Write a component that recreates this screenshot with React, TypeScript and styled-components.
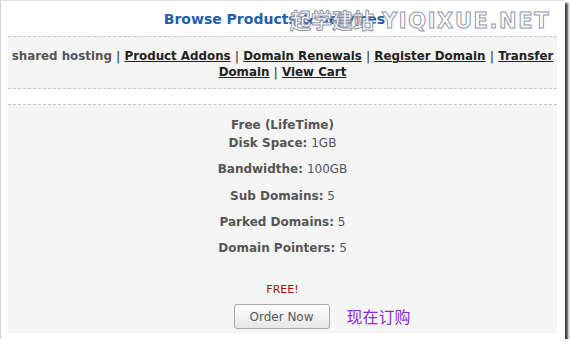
import React from "react";
import styled, { createGlobalStyle } from "styled-components";

const GlobalStyle = createGlobalStyle`
  html, body {
    margin: 0;
    padding: 0;
    background: #ffffff;
  }
  body {
    font-family: "DejaVu Sans", Verdana, sans-serif;
  }
`;

const Frame = styled.div`
  position: relative;
  box-sizing: border-box;
  width: 565px;
  height: 339px;
  background: #fff;
  border-left: 1px solid #d0d0d0;
  border-top: 1px solid #e0e0e0;
  box-shadow: 3px 3px 2px rgba(0, 0, 0, 0.75);
  padding: 0 8px 0 7px;
  display: flex;
  flex-direction: column;
`;

const Heading = styled.h2`
  margin: 0;
  height: 34px;
  display: flex;
  align-items: center;
  justify-content: center;
  padding: 1px 16px 0 0;
  font-size: 14px;
  font-weight: bold;
  color: #1d5fae;
`;

const Panel = styled.div<{ $bottom?: boolean }>`
  background: #f5f5f5;
  border-top: 1px dashed #c8c8c8;
  border-bottom: ${(p) => (p.$bottom ? "1px dashed #c8c8c8" : "none")};
  text-align: center;
`;

const Nav = styled(Panel)`
  padding: 11px 2px 8px;
  font-size: 11.85px;
  font-weight: bold;
  line-height: 16px;
  color: #555;
`;

const NavLink = styled.a`
  color: #222;
  text-decoration: underline;
  cursor: pointer;
`;

const Gap = styled.div`
  height: 15px;
`;

const Product = styled(Panel)`
  flex: 1;
  margin-bottom: 6px;
  padding-top: 12px;
  display: flex;
  flex-direction: column;
  align-items: center;
  font-size: 12px;
  color: #555;
`;

const Title = styled.div`
  font-weight: bold;
  line-height: 17px;
`;

const Spec = styled.div<{ $first?: boolean }>`
  line-height: 17px;
  margin-top: ${(p) => (p.$first ? "1px" : "9.3px")};
  b {
    font-weight: bold;
  }
`;

const Price = styled.div`
  margin-top: 26px;
  color: #a01010;
  font-size: 11px;
  line-height: 14px;
`;

const OrderRow = styled.div`
  position: relative;
  margin-top: 7px;
  margin-right: 2px;
`;

const OrderButton = styled.button`
  width: 96px;
  height: 25px;
  border: 1px solid #a8a8a8;
  border-radius: 3px;
  background: linear-gradient(#ffffff, #e6e6e6);
  font-family: "DejaVu Sans", Verdana, sans-serif;
  font-size: 12px;
  color: #555;
  cursor: pointer;
`;

const Note = styled.span`
  position: absolute;
  left: 113px;
  top: 0;
  white-space: nowrap;
  font-family: "Noto Sans CJK SC", sans-serif;
  font-size: 16px;
  color: #8a2be2;
`;

const Watermark = styled.div`
  position: absolute;
  left: 289px;
  top: 3px;
  white-space: nowrap;
  font-family: "Noto Sans CJK SC", "DejaVu Sans", sans-serif;
  font-weight: 700;
  font-size: 21px;
  color: #fff;
  -webkit-text-stroke: 1px #8f96a8;
  pointer-events: none;
`;

const Latin = styled.span`
  margin-left: 8px;
  font-family: "DejaVu Sans", sans-serif;
  letter-spacing: 1.6px;
`;

const links = ["Product Addons", "Domain Renewals", "Register Domain", "Transfer Domain", "View Cart"];

const specs: [string, string][] = [
  ["Disk Space", "1GB"],
  ["Bandwidthe", "100GB"],
  ["Sub Domains", "5"],
  ["Parked Domains", "5"],
  ["Domain Pointers", "5"],
];

export default function App() {
  return (
    <>
      <GlobalStyle />
      <Frame>
        <Heading>Browse Products &amp; Services</Heading>
        <Nav $bottom>
          shared hosting
          {links.map((l) => (
            <React.Fragment key={l}>
              {" | "}
              <NavLink>{l}</NavLink>
            </React.Fragment>
          ))}
        </Nav>
        <Gap />
        <Product>
          <Title>Free (LifeTime)</Title>
          {specs.map(([k, v], i) => (
            <Spec key={k} $first={i === 0}>
              <b>{k}:</b> {v}
            </Spec>
          ))}
          <Price>FREE!</Price>
          <OrderRow>
            <OrderButton>Order Now</OrderButton>
            <Note>现在订购</Note>
          </OrderRow>
        </Product>
        <Watermark>
          起学建站<Latin>YIQIXUE.NET</Latin>
        </Watermark>
      </Frame>
    </>
  );
}
